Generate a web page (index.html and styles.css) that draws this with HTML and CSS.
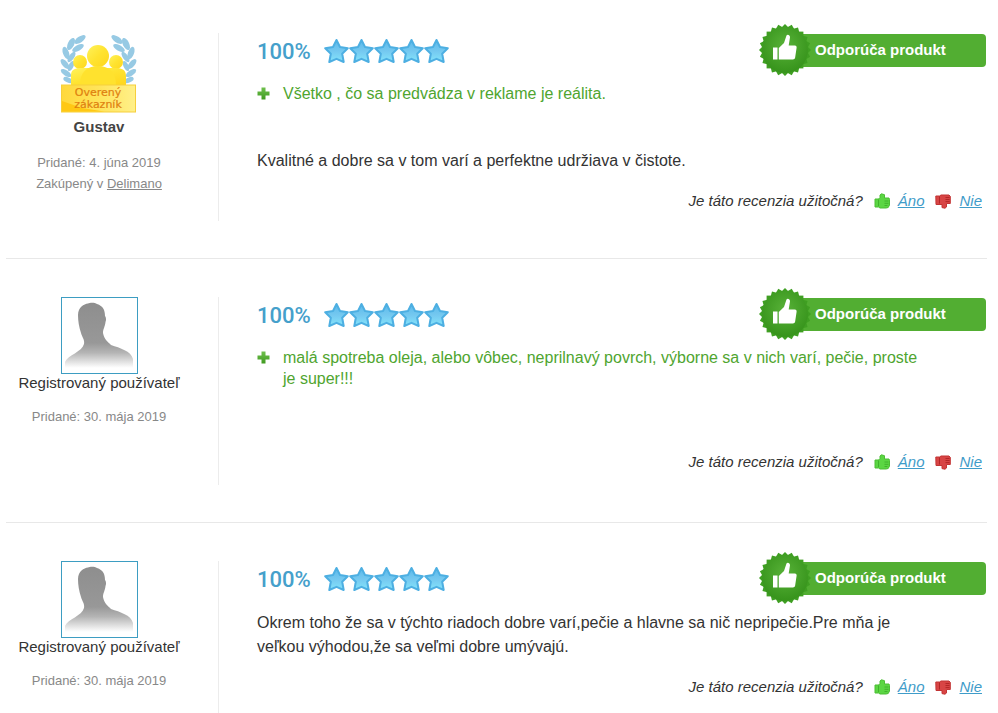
FILE: index.html
```html
<!DOCTYPE html>
<html lang="sk">
<head>
<meta charset="utf-8">
<title>Recenzie</title>
<link rel="stylesheet" href="styles.css">
</head>
<body>
<svg class="defs" aria-hidden="true">
  <defs>
    <linearGradient id="starFill" x1="0" y1="0" x2="0" y2="1">
      <stop offset="0" stop-color="#5bb8ea"/><stop offset=".5" stop-color="#74c8f0"/><stop offset="1" stop-color="#84e4fb"/>
    </linearGradient>
    <linearGradient id="plusFill" x1="0" y1="0" x2="0" y2="1">
      <stop offset="0" stop-color="#6fc04d"/><stop offset="1" stop-color="#3f9a20"/>
    </linearGradient>
    <radialGradient id="sealFill" cx=".5" cy=".4" r=".6">
      <stop offset="0" stop-color="#58b238"/><stop offset="1" stop-color="#36931b"/>
    </radialGradient>
    <linearGradient id="manFill" x1="0" y1="0" x2="0" y2="1">
      <stop offset="0" stop-color="#8e8e8e"/><stop offset=".58" stop-color="#989898"/><stop offset=".72" stop-color="#b4b4b4"/><stop offset=".94" stop-color="#fff"/>
    </linearGradient>
    <linearGradient id="goldFill" x1="0" y1="0" x2="1" y2="1">
      <stop offset="0" stop-color="#fff25a"/><stop offset=".5" stop-color="#ffe330"/><stop offset="1" stop-color="#ffd61c"/>
    </linearGradient>
    <linearGradient id="plateFill" x1="0" y1="0" x2="1" y2="0">
      <stop offset="0" stop-color="#ffd83c"/><stop offset=".5" stop-color="#ffe45a"/><stop offset="1" stop-color="#fff08a"/>
    </linearGradient>
    <symbol id="star" viewBox="0 0 25 26">
      <path d="M12.500 2L16 9L23.800 10.200L18.200 15.700L19.700 24L12.500 20.800L5.300 24L6.800 15.700L1.200 10.200L9 9Z" fill="url(#starFill)" stroke="#4dafe2" stroke-width="2" stroke-linejoin="round"/>
    </symbol>
    <symbol id="plus" viewBox="0 0 13 13">
      <path d="M4.500 .5h4v4h4v4h-4v4h-4v-4h-4v-4h4z" fill="url(#plusFill)"/>
    </symbol>
    <symbol id="thumb-up" viewBox="0 0 16 16">
      <path d="M1 6h3.500L6 4.500V2L7.500 .8l3 .9V5h4.500l.5 1.500v5.500l-1.300 2.500L12 15H6L4.500 14H1z" fill="#5bd643" stroke="#4cbd35"/>
      <path d="M4.500 6.500v6.500M10.500 8h4M10.500 10.300h4M10.500 12.500h3" fill="none" stroke="#3ba827" stroke-width=".8"/>
    </symbol>
    <symbol id="thumb-down" viewBox="0 0 16 16">
      <path d="M.8 3h3.700L6 2h8l1.300 1.300v7.200H11.500V14L10 15.200l-3-.6V11.500H1z" fill="#d84545" stroke="#c23434"/>
      <path d="M4.500 3.500v7M10.500 4.500h4M10.500 6.500h4M10.500 8.600h4" fill="none" stroke="#a82020" stroke-width=".8"/>
    </symbol>
    <symbol id="seal" viewBox="0 0 52 52">
      <g fill="#3f9f22">
        <rect id="tooth" x="7.600" y="7.600" width="36.800" height="36.800"/>
        <use href="#tooth" transform="rotate(15 26 26)"/>
        <use href="#tooth" transform="rotate(30 26 26)"/>
        <use href="#tooth" transform="rotate(45 26 26)"/>
        <use href="#tooth" transform="rotate(60 26 26)"/>
        <use href="#tooth" transform="rotate(75 26 26)"/>
      </g>
      <circle cx="26" cy="26" r="23" fill="url(#sealFill)"/>
      <path d="M14 23.500h4.500v12H14zM19.800 24l5.200-5 2.500-7.500c.8-1.600 3.600-.6 3.500 1.700l-1.300 8.300h6.100c1.500 0 2 1 1.800 2.300l-1.500 10c-.3 1.300-1 1.700-2.200 1.700H19.800z" fill="#fff"/>
    </symbol>
    <symbol id="man" viewBox="0 0 75 75">
      <path d="M3 64C6 57 20 54 22 46C23 42 20 39 19 35C17 29 16 23 16 17C16 9 22 6 26 5.500C28 4.500 33 4.500 35 6C41 8 43 12 43 18C44 19 44.500 22 43.500 24C43 29 41 31 41 35C42 41 46 44 49 47C58 50 69 53 71 61V74H3z" fill="url(#manFill)"/>
    </symbol>
    <symbol id="verified" viewBox="0 0 78 80">
      <g id="laurel" fill="#97cae4">
        <ellipse cx="20" cy="4.500" rx="6.500" ry="3" transform="rotate(-35 20 4.500)"/>
        <ellipse cx="11" cy="9" rx="6.500" ry="3.200" transform="rotate(-65 11 9)"/>
        <ellipse cx="18" cy="13" rx="6.500" ry="2.800" transform="rotate(-30 18 13)"/>
        <ellipse cx="6" cy="18" rx="6.500" ry="3" transform="rotate(70 6 18)"/>
        <ellipse cx="11.500" cy="22" rx="6" ry="2.600" transform="rotate(-55 11.500 22)"/>
        <ellipse cx="5" cy="29" rx="6" ry="2.800" transform="rotate(50 5 29)"/>
        <ellipse cx="11" cy="31" rx="5.500" ry="2.500" transform="rotate(-65 11 31)"/>
        <ellipse cx="6" cy="38" rx="6" ry="2.700" transform="rotate(35 6 38)"/>
        <ellipse cx="8" cy="45" rx="5" ry="2.500" transform="rotate(25 8 45)"/>
      </g>
      <use href="#laurel" transform="translate(77 0) scale(-1 1)"/>
      <g fill="url(#goldFill)">
        <circle cx="20" cy="27" r="7"/>
        <circle cx="56" cy="27" r="7"/>
        <path d="M11 50V40c0-5 4-7 9-7h36c6 0 10 2 10 8v9z"/>
        <circle cx="38" cy="21" r="11"/>
      </g>
      <path d="M20 50c0-13 7-19 18-19s18 6 18 19z" fill="#ffe22e"/>
      <rect x="1.500" y="50" width="74" height="27" fill="url(#plateFill)" stroke="#f6cf3c"/>
      <path d="M2 76.500V66l20 7 22 3.500z" fill="#ffc814"/>
      <text class="plate" x="38" y="61">Overený</text>
      <text class="plate" x="38" y="73">zákazník</text>
    </symbol>
    <symbol id="stars" viewBox="0 0 125 26">
      <use href="#star" x="0" width="25" height="26"/>
      <use href="#star" x="25" width="25" height="26"/>
      <use href="#star" x="50" width="25" height="26"/>
      <use href="#star" x="75" width="25" height="26"/>
      <use href="#star" x="100" width="25" height="26"/>
    </symbol>
  </defs>
</svg>
<main class="reviews">
  <article class="review">
    <aside class="author">
      <svg class="medal"><use href="#verified"/></svg>
      <strong class="name name-verified">Gustav</strong>
      <p class="meta">Pridané: 4. júna 2019<br>Zakúpený v <a href="#">Delimano</a></p>
    </aside>
    <div class="body">
      <header class="head">
        <span class="score">100%</span>
        <svg class="stars"><use href="#stars"/></svg>
        <span class="ribbon"><svg class="seal"><use href="#seal"/></svg>Odporúča produkt</span>
      </header>
      <ul class="pros">
        <li><svg class="plus"><use href="#plus"/></svg>Všetko , čo sa predvádza v reklame je reálita.</li>
      </ul>
      <p class="text">Kvalitné a dobre sa v tom varí a perfektne udržiava v čistote.</p>
      <footer class="vote">
        <span class="question">Je táto recenzia užitočná?</span>
        <svg class="thumb"><use href="#thumb-up"/></svg><a class="yes" href="#">Áno</a>
        <svg class="thumb"><use href="#thumb-down"/></svg><a href="#">Nie</a>
      </footer>
    </div>
  </article>
  <article class="review">
    <aside class="author">
      <svg class="avatar"><use href="#man"/></svg>
      <span class="name">Registrovaný používateľ</span>
      <p class="meta">Pridané: 30. mája 2019</p>
    </aside>
    <div class="body">
      <header class="head">
        <span class="score">100%</span>
        <svg class="stars"><use href="#stars"/></svg>
        <span class="ribbon"><svg class="seal"><use href="#seal"/></svg>Odporúča produkt</span>
      </header>
      <ul class="pros">
        <li><svg class="plus"><use href="#plus"/></svg>malá spotreba oleja, alebo vôbec, neprilnavý povrch, výborne sa v nich varí, pečie, proste je super!!!</li>
      </ul>
      <footer class="vote">
        <span class="question">Je táto recenzia užitočná?</span>
        <svg class="thumb"><use href="#thumb-up"/></svg><a class="yes" href="#">Áno</a>
        <svg class="thumb"><use href="#thumb-down"/></svg><a href="#">Nie</a>
      </footer>
    </div>
  </article>
  <article class="review">
    <aside class="author">
      <svg class="avatar"><use href="#man"/></svg>
      <span class="name">Registrovaný používateľ</span>
      <p class="meta">Pridané: 30. mája 2019</p>
    </aside>
    <div class="body">
      <header class="head">
        <span class="score">100%</span>
        <svg class="stars"><use href="#stars"/></svg>
        <span class="ribbon"><svg class="seal"><use href="#seal"/></svg>Odporúča produkt</span>
      </header>
      <p class="text">Okrem toho že sa v týchto riadoch dobre varí,pečie a hlavne sa nič nepripečie.Pre mňa je veľkou výhodou,že sa veľmi dobre umývajú.</p>
      <footer class="vote">
        <span class="question">Je táto recenzia užitočná?</span>
        <svg class="thumb"><use href="#thumb-up"/></svg><a class="yes" href="#">Áno</a>
        <svg class="thumb"><use href="#thumb-down"/></svg><a href="#">Nie</a>
      </footer>
    </div>
  </article>
</main>
</body>
</html>
```
FILE: styles.css
```css
body {
  margin: 0;
  background: #fff;
  color: #333;
  font: 16px/24px "Liberation Sans", Arial, sans-serif;
}

svg {
  display: block;
  flex: none;
}

.defs {
  position: absolute;
  width: 0;
  height: 0;
}

.reviews {
  padding: 33px 11px 0 6px;
}

.review {
  display: flex;
  padding-bottom: 37px;
  margin-bottom: 38px;
  border-bottom: 1px solid #e8e8e8;
}

.review:last-child {
  padding: 0;
  margin: 0;
  border: 0;
}

/* Author column */
.author {
  flex: none;
  box-sizing: border-box;
  width: 213px;
  min-height: 188px;
  padding-right: 26px;
  border-right: 1px solid #ececec;
  text-align: center;
}

.review:last-child .author {
  min-height: 152px;
}

.medal {
  width: 78px;
  height: 80px;
  margin: 2px auto 3px;
}

.plate {
  fill: #e0800f;
  stroke: #e0800f;
  stroke-width: .2px;
  font: 11px "DejaVu Sans", sans-serif;
  text-anchor: middle;
}

.avatar {
  width: 75px;
  height: 75px;
  margin: 0 auto;
  border: 1px solid #3d9dc2;
}

.name {
  display: block;
  margin-bottom: 14px;
  font-size: 15px;
  line-height: 18px;
}

.name-verified {
  margin-bottom: 16px;
  color: #444;
}

.meta {
  margin: 0;
  color: #888;
  font-size: 13px;
  line-height: 21px;
}

.meta a {
  color: inherit;
}

/* Review column */
.body {
  flex: 1;
  min-width: 0;
  padding-left: 38px;
}

.head {
  display: flex;
  align-items: center;
  height: 36px;
  margin-bottom: 14px;
}

.score {
  color: #45a0cb;
  font: 500 22px Roboto, sans-serif;
}

.stars {
  width: 125px;
  height: 26px;
  margin-left: 13px;
}

.ribbon {
  position: relative;
  box-sizing: border-box;
  width: 201px;
  margin: 0 1px 1px auto;
  padding: 0 0 2px 30px;
  border-radius: 4px;
  background: #52ae32;
  color: #fff;
  font-size: 15px;
  font-weight: bold;
  line-height: 31px;
}

.seal {
  position: absolute;
  top: -10px;
  left: -26px;
  width: 52px;
  height: 52px;
}

.pros {
  margin: 0 57px 0 0;
  padding: 0 0 45px;
  list-style: none;
  color: #4fa52f;
  line-height: 21px;
}

.pros li {
  display: flex;
  gap: 13px;
}

.plus {
  width: 13px;
  height: 13px;
  margin-top: 4px;
}

.text {
  margin: 0 57px 0 0;
}

.vote {
  display: flex;
  align-items: center;
  justify-content: flex-end;
  gap: 8px;
  margin-top: 18px;
  padding-right: 5px;
  font-size: 15px;
  font-style: italic;
  line-height: 20px;
}

.question,
.yes {
  margin-right: 3px;
}

.vote a {
  color: #3f9cc9;
}

.thumb {
  width: 16px;
  height: 16px;
}
```
